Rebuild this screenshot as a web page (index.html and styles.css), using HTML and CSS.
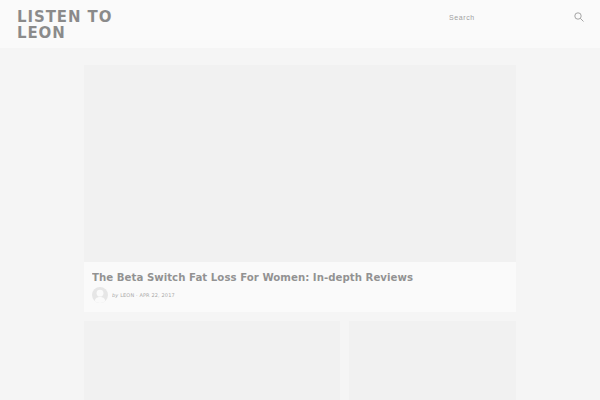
FILE: index.html
```html
<!DOCTYPE html>
<html lang="en">
<head>
    <meta charset="UTF-8">
    <meta name="viewport" content="width=device-width, initial-scale=1.0">
    <title>Listen To Leon</title>
    <link rel="stylesheet" href="styles.css">
</head>
<body>
    <header class="site-header">
        <a class="site-title" href="#">LISTEN TO LEON</a>
        <form class="search-form">
            <span class="search-label">Search</span>
            <svg class="search-icon" width="10" height="10" viewBox="0 0 10 10" aria-hidden="true">
                <circle cx="4" cy="4" r="3.2"></circle>
                <path d="M6.4 6.4 L9.5 9.5"></path>
            </svg>
        </form>
    </header>

    <main class="content">
        <article class="post-featured">
            <div class="post-thumb"></div>
            <div class="post-info">
                <h2 class="post-title">The Beta Switch Fat Loss For Women: In-depth Reviews</h2>
                <div class="post-meta">
                    <svg class="avatar" width="16" height="16" viewBox="0 0 16 16" aria-hidden="true">
                        <circle class="avatar-bg" cx="8" cy="8" r="8"></circle>
                        <circle class="avatar-fg" cx="8" cy="6.2" r="3.4"></circle>
                        <path class="avatar-fg" d="M2.6 14 C3.4 10.8 5.6 10 8 10 C10.4 10 12.6 10.8 13.4 14 C12 15.3 10 16 8 16 C6 16 4 15.3 2.6 14 Z"></path>
                    </svg>
                    <span class="meta-text"><em>by</em> LEON · APR 22, 2017</span>
                </div>
            </div>
        </article>

        <div class="post-grid">
            <div class="post-thumb-large"></div>
            <div class="post-thumb-small"></div>
        </div>
    </main>
</body>
</html>
```

FILE: styles.css
```css
html, body {
    height: 100%;
}

body {
    margin: 0;
    background-color: #f5f5f5;
    font-family: "DejaVu Sans", sans-serif;
    overflow: hidden;
}

.site-header {
    display: flex;
    justify-content: space-between;
    height: 48px;
    padding: 0 17px;
    background-color: #fafafa;
}

.site-title {
    width: 120px;
    margin-top: 9px;
    color: #1c1c1c;
    opacity: 0.5;
    font-size: 15px;
    font-weight: bold;
    line-height: 16px;
    letter-spacing: 0.9px;
    text-decoration: none;
}

.search-form {
    display: flex;
    align-items: center;
    justify-content: space-between;
    align-self: flex-start;
    width: 135px;
    height: 10px;
    margin-top: 12px;
    margin-right: -1px;
}

.search-label {
    color: #444;
    opacity: 0.5;
    font-family: "Liberation Sans", sans-serif;
    font-size: 7px;
    letter-spacing: 0.6px;
}

.search-icon {
    fill: none;
    stroke: #8f8f8f;
    stroke-width: 0.8;
}

.content {
    width: 432px;
    margin: 0 auto;
    padding-top: 17px;
}

.post-thumb {
    height: 197px;
    background-color: #f1f1f1;
}

.post-info {
    height: 50px;
    padding: 8px;
    box-sizing: border-box;
    background-color: #fafafa;
}

.post-title {
    margin: 0 0 2px;
    color: #2c2c2c;
    opacity: 0.5;
    font-size: 10.2px;
    font-weight: bold;
    line-height: 15px;
    letter-spacing: 0.03px;
}

.post-meta {
    display: flex;
    align-items: center;
    gap: 4px;
}

.avatar-bg {
    fill: #e6e6e6;
}

.avatar-fg {
    fill: #fafafa;
}

.meta-text {
    color: #555;
    opacity: 0.5;
    font-size: 5px;
    letter-spacing: 0.13px;
}

.post-grid {
    display: grid;
    grid-template-columns: 256px 167px;
    gap: 9px;
    margin-top: 9px;
}

.post-thumb-large,
.post-thumb-small {
    height: 200px;
    background-color: #f1f1f1;
}
```
